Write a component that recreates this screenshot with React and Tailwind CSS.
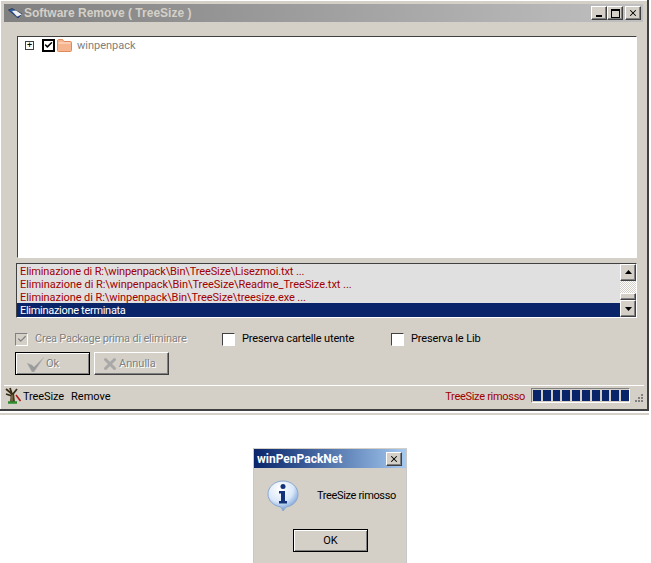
import { Check, X } from 'lucide-react'

const logLines = [
  { text: 'Eliminazione di R:\\winpenpack\\Bin\\TreeSize\\Lisezmoi.txt ...', tracking: 'tracking-[-0.12px]' },
  { text: 'Eliminazione di R:\\winpenpack\\Bin\\TreeSize\\Readme_TreeSize.txt ...', tracking: 'tracking-[-0.04px]' },
  { text: 'Eliminazione di R:\\winpenpack\\Bin\\TreeSize\\treesize.exe ...', tracking: 'tracking-[-0.07px]' },
]

const raised = 'border border-t-white border-l-white border-r-[#404040] border-b-[#404040] bg-[#d4d0c8] shadow-[inset_-1px_-1px_0_#808080]'
const sunken = 'border border-t-[#404040] border-l-[#404040] border-r-white border-b-white'

function WinButton({ children }) {
  return <div className={`w-4 h-[14px] flex items-center justify-center ${raised}`}>{children}</div>
}

function ArrowButton({ up }) {
  return (
    <div className={`w-4 h-[17px] flex items-center justify-center ${raised}`}>
      <svg width="7" height="4" viewBox="0 0 7 4">
        <path d={up ? 'M3.5 0L7 4H0z' : 'M0 0H7L3.5 4z'} fill="#000" />
      </svg>
    </div>
  )
}

function Checkbox({ label, className }) {
  return (
    <div className={`flex items-center ${className}`}>
      <div className={`w-[13px] h-[13px] bg-white ${sunken}`} />
      <span className="ml-[7px] text-black tracking-[-0.15px]">{label}</span>
    </div>
  )
}

function AppIcon() {
  return (
    <svg width="15" height="11" viewBox="0 0 15 11">
      <path d="M0.500 2L4 0.500L14 6L10 10z" fill="#2f5fa8" stroke="#26344f" strokeWidth="0.800" />
      <path d="M4 3L8 2.500L14 6.500L9 8.500z" fill="#f2f2f2" />
    </svg>
  )
}

function FolderIcon() {
  return (
    <svg width="15" height="13" viewBox="0 0 15 13">
      <path d="M0.5 3V11.5Q0.5 12.5 1.5 12.5H13.5Q14.5 12.5 14.5 11.5V3.5Q14.5 2.5 13.5 2.5H7L5.5 0.5H2Q0.5 0.5 0.5 2z" fill="#f6b48e" stroke="#e08a5c" />
      <path d="M1.5 4H13.5" stroke="#fde3d2" />
    </svg>
  )
}

function TreeIcon() {
  return (
    <svg width="18" height="18" viewBox="0 0 18 18">
      <path d="M7 6L6 15H11L10 6z" fill="#4a3a1c" />
      <path d="M8 7L2 2M8 7L6 1M9 7L13 2M8 9L2 7" stroke="#3a2c14" strokeWidth="1.800" fill="none" />
      <path d="M8 8V14" stroke="#a08a5c" />
      <path d="M4 15.500H13" stroke="#2f8a2f" strokeWidth="2.500" />
      <path d="M12 8L16.500 14" stroke="#b01818" strokeWidth="1.600" />
    </svg>
  )
}

function InfoIcon() {
  return (
    <svg width="32" height="32" viewBox="0 0 32 32">
      <defs>
        <radialGradient id="bubble" cx="40%" cy="25%" r="80%">
          <stop offset="0%" stopColor="#ffffff" />
          <stop offset="55%" stopColor="#dbe8f8" />
          <stop offset="100%" stopColor="#5f8fd2" />
        </radialGradient>
      </defs>
      <path d="M16 1C7.5 1 1 7 1 14C1 21 7 26 14 27L16 31L19 27C26 26 31 21 31 14C31 7 24.500 1 16 1z" fill="url(#bubble)" stroke="#8aa8cf" />
      <circle cx="16" cy="6.500" r="2.500" fill="#12327a" />
      <path d="M12 11H18V21H20V23.500H12V21H14V13.500H12z" fill="#12327a" />
    </svg>
  )
}

export default function App() {
  return (
    <div className="w-[651px] h-[563px] bg-white overflow-hidden font-['Roboto',sans-serif] text-[11px] leading-[14px]">
      {/* main window */}
      <div className="w-[649px] h-[411px] bg-[#d4d0c8] border-r-2 border-b-2 border-r-[#404040] border-b-[#404040] p-1 flex flex-col shadow-[inset_1px_1px_0_#ffffff]">
        <div className="h-[18px] shrink-0 flex items-center pl-[4px] pr-[2px] bg-gradient-to-r from-[#808080] to-[#c0c0c0]">
          <AppIcon />
          <span className="ml-[1px] text-[12px] font-bold text-[#d4d0c8] font-['Liberation_Sans',sans-serif]">Software Remove ( TreeSize )</span>
          <div className="ml-auto flex items-center">
            <WinButton>
              <div className="w-[6px] h-[2px] mt-[6px] bg-black" />
            </WinButton>
            <WinButton>
              <div className="w-[9px] h-[9px] border border-black border-t-2" />
            </WinButton>
            <div className="ml-[2px]">
              <WinButton>
                <X size={10} strokeWidth={2.500} color="#000" />
              </WinButton>
            </div>
          </div>
        </div>

        {/* tree */}
        <div className={`mt-[14px] ml-[13px] w-[620px] h-[222px] shrink-0 bg-white pt-[1px] ${sunken}`}>
          <div className="flex items-center h-[14px]">
            <div className="ml-[7px] w-[9px] h-[9px] border border-[#404040] flex items-center justify-center text-black text-[9px] leading-none">+</div>
            <div className="ml-[8px] w-[13px] h-[13px] border-2 border-black flex items-center justify-center">
              <Check size={10} strokeWidth={4} color="#000" />
            </div>
            <div className="ml-[2px] flex"><FolderIcon /></div>
            <span className="ml-[5px] mt-[1px] text-[#808080]">winpenpack</span>
          </div>
        </div>

        {/* log */}
        <div className={`mt-[5px] ml-[12px] w-[621px] h-[55px] shrink-0 flex bg-[#e0e0e0] ${sunken}`}>
          <div className="flex-1 pl-[3px] flex flex-col">
            {logLines.map(line => (
              <div key={line.text} className={`h-[13px] leading-[15px] text-[#a00000] whitespace-nowrap ${line.tracking}`}>{line.text}</div>
            ))}
            <div className="-ml-[3px] pl-[3px] h-[14px] leading-[15px] bg-[#0a246a] text-white tracking-[-0.3px]">Eliminazione terminata</div>
          </div>
          <div className="w-4 flex flex-col">
            <ArrowButton up />
            <div className="h-[13px] bg-[repeating-conic-gradient(#d4d0c8_0_25%,#ffffff_0_50%)] bg-[length:2px_2px]" />
            <div className={`h-[7px] ${raised}`} />
            <ArrowButton />
          </div>
        </div>

        {/* options */}
        <div className="mt-[14px] ml-[11px] flex items-center h-[16px]">
          <div className="flex items-center w-[207px]">
            <div className="w-[13px] h-[13px] bg-[#d4d0c8] border border-t-[#808080] border-l-[#808080] border-r-white border-b-white flex items-center justify-center">
              <Check size={10} strokeWidth={3} color="#808080" />
            </div>
            <span className="ml-[7px] text-[#808080] tracking-[-0.2px] [text-shadow:1px_1px_0_#ffffff]">Crea Package prima di eliminare</span>
          </div>
          <Checkbox label="Preserva cartelle utente" className="w-[169px]" />
          <Checkbox label="Preserva le Lib" />
        </div>

        {/* buttons */}
        <div className="mt-[6px] ml-[11px] flex gap-1">
          <div className="w-[75px] h-[23px] border border-black bg-[#d4d0c8] shadow-[inset_1px_1px_0_#ffffff,inset_-1px_-1px_0_#808080] flex items-center pl-[10px]">
            <svg width="20" height="16" viewBox="0 0 20 16">
              <path d="M1 7L6 9L8 11L18 1L8 16H6z" fill="#9a9a9a" stroke="#b8b8b8" strokeWidth="0.500" />
            </svg>
            <span className="text-[#808080] [text-shadow:1px_1px_0_#ffffff]">Ok</span>
          </div>
          <div className="w-[75px] h-[23px] border border-t-white border-l-white border-r-[#404040] border-b-[#404040] shadow-[inset_-1px_-1px_0_#808080] flex items-center pl-[6px]">
            <X size={18} strokeWidth={4} color="#a8a8a8" />
            <span className="text-[#808080] [text-shadow:1px_1px_0_#ffffff]">Annulla</span>
          </div>
        </div>

        {/* status bar */}
        <div className="mt-[10px] -mr-[1px] border-t border-t-white h-[25px] pt-[3px] flex items-center text-black">
          <div className="flex -mt-[3px]"><TreeIcon /></div>
          <span className="ml-[1px] tracking-[-0.1px]">TreeSize</span>
          <span className="ml-[7px]">Remove</span>
          <span className="ml-auto text-[#a00000] tracking-[-0.3px]">TreeSize rimosso</span>
          <div className="ml-[6px] -mt-[3px] w-[99px] h-[15px] border border-t-[#808080] border-l-[#808080] border-r-white border-b-white flex gap-[2px] pl-[1px] py-[1px]">
            {Array.from({ length: 10 }).map((_, i) => (
              <div key={i} className="w-[8px] bg-[#0a246a]" />
            ))}
          </div>
          <div className="ml-[2px] w-[12px] h-[12px] mt-[3px] flex items-end justify-end">
            <svg width="12" height="12" viewBox="0 0 12 12">
              <path d="M9 1h2v2H9zM6 4h2v2H6zM9 4h2v2H9zM3 7h2v2H3zM6 7h2v2H6zM9 7h2v2H9z" fill="#808080" />
            </svg>
          </div>
        </div>
      </div>
      <div className="mt-[2px] w-[649px] h-[2px] bg-[#d4d0c8]" />

      {/* message box */}
      <div className="mt-[33px] ml-[253px] w-[154px] h-[115px] bg-[#d4d0c8] border-l border-r border-[#c8c8c8] flex flex-col">
        <div className="h-[19px] shrink-0 mt-[1px] bg-gradient-to-r from-[#0a246a] to-[#a6caf0] flex items-center pl-[3px] pr-[4px]">
          <span className="font-bold text-white text-[12px]">winPenPackNet</span>
          <div className={`ml-auto w-4 h-[14px] flex items-center justify-center ${raised}`}>
            <X size={10} strokeWidth={2.500} color="#000" />
          </div>
        </div>
        <div className="flex items-center mt-[12px] ml-[13px]">
          <InfoIcon />
          <span className="ml-[18px] text-black text-[11px] tracking-[-0.35px]">TreeSize rimosso</span>
        </div>
        <div className="mt-[17px] ml-[39px] w-[75px] h-[23px] border border-black bg-[#d4d0c8] shadow-[inset_1px_1px_0_#ffffff,inset_-1px_-1px_0_#808080] flex items-center justify-center text-black text-[11px]">OK</div>
      </div>
    </div>
  )
}
